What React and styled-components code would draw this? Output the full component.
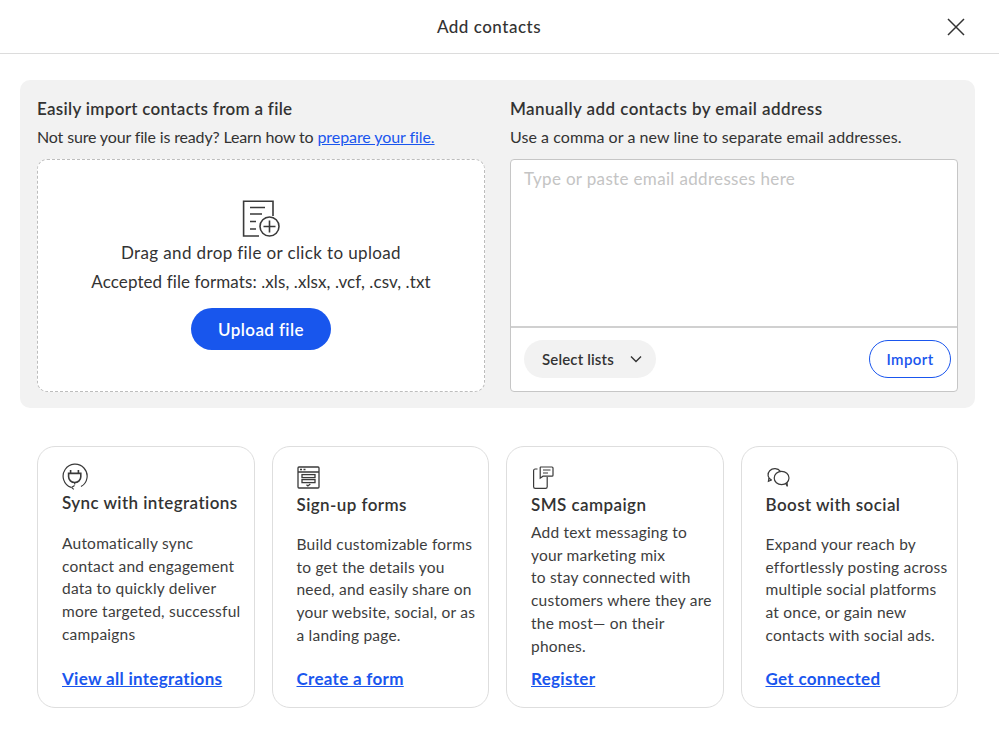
import React from "react";
import styled, { createGlobalStyle } from "styled-components";

const Global = createGlobalStyle`
  html, body { margin: 0; padding: 0; background: #fff; }
  body { font-family: "Lato", "Open Sans", sans-serif; color: #333; }
  * { box-sizing: border-box; }
`;

const Page = styled.div`
  width: 999px;
  height: 738px;
  overflow: hidden;
  display: flex;
  flex-direction: column;
`;
const Header = styled.header`
  height: 54px;
  flex: none;
  border-bottom: 1px solid #dcdcdc;
  display: flex;
  align-items: center;
  padding: 0 34px 0 20px;
`;
const Title = styled.h1`
  margin: 0;
  flex: 1;
  text-align: center;
  font-size: 17px;
  font-weight: 500;
  letter-spacing: 0.5px;
  padding-left: 11px;
`;
const Close = styled.button`
  border: 0;
  background: none;
  padding: 0;
  width: 18px;
  height: 18px;
  display: flex;
  color: #333;
`;
const Panel = styled.section`
  margin: 26px 24px 0 20px;
  height: 328px;
  background: #f2f2f2;
  border-radius: 10px;
  padding: 17px 17px;
  display: grid;
  grid-template-columns: 448px 448px;
  column-gap: 25px;
`;
const Column = styled.div`
  display: flex;
  flex-direction: column;
`;
const Heading = styled.h2`
  margin: 0;
  font-size: 17px;
  line-height: 24px;
  font-weight: 600;
  letter-spacing: ${(p) => p.$track}px;
  white-space: nowrap;
`;
const Sub = styled.p`
  margin: 5px 0 0;
  font-size: 16px;
  line-height: 22px;
  letter-spacing: ${(p) => p.$track}px;
  height: 33px;
  white-space: nowrap;
`;
const SubLink = styled.a`
  color: #1a56ee;
  text-decoration: underline;
  letter-spacing: -0.08px;
`;
const Drop = styled.div`
  height: 233px;
  border: 1px dashed #bdbdbd;
  border-radius: 10px;
  background: #fff;
  display: flex;
  flex-direction: column;
  align-items: center;
  padding-top: 40px;
`;
const DropText = styled.p`
  margin: ${(p) => p.$top}px 0 0;
  font-size: 17px;
  line-height: 22px;
  letter-spacing: ${(p) => p.$track}px;
  white-space: nowrap;
`;
const Upload = styled.button`
  margin-top: 15px;
  width: 140px;
  height: 42px;
  border: 0;
  border-radius: 21px;
  background: #1856ed;
  color: #fff;
  font: 600 17px "Lato", sans-serif;
  letter-spacing: 0.4px;
`;
const EmailBox = styled.div`
  height: 233px;
  border: 1px solid #c6c6c6;
  border-radius: 4px;
  background: #fff;
  display: flex;
  flex-direction: column;
`;
const EmailInput = styled.textarea`
  flex: none;
  height: 168px;
  border: 0;
  border-bottom: 2px solid #d0d0d0;
  outline: 0;
  resize: none;
  padding: 8px 13px;
  background: none;
  font: 400 17px/22px "Lato", sans-serif;
  letter-spacing: 0.34px;
  &::placeholder { color: #c4c4c4; opacity: 1; }
`;
const EmailFoot = styled.div`
  flex: 1;
  display: flex;
  align-items: center;
  justify-content: space-between;
  padding: 0 6px 2px 13px;
`;
const SelectPill = styled.button`
  width: 132px;
  height: 38px;
  border: 0;
  border-radius: 19px;
  background: #f2f2f2;
  color: #333;
  padding: 0 14px 0 18px;
  display: flex;
  align-items: center;
  justify-content: space-between;
  font: 600 15px "Lato", sans-serif;
  letter-spacing: 0.15px;
`;
const Import = styled.button`
  width: 82px;
  height: 38px;
  border: 1px solid #1a56ee;
  border-radius: 19px;
  background: #fff;
  color: #1a56ee;
  font: 600 15px "Lato", sans-serif;
  letter-spacing: 0.4px;
`;
const Cards = styled.section`
  margin: 38px 41px 0 37px;
  display: grid;
  grid-template-columns: repeat(4, minmax(0, 1fr));
  column-gap: 17px;
`;
const Card = styled.article`
  height: 262px;
  border: 1px solid #dedede;
  border-radius: 18px;
  padding: ${(p) => p.$top}px 12px 16px 24px;
  display: flex;
  flex-direction: column;
`;
const IconSlot = styled.div`
  height: ${(p) => p.$h}px;
  flex: none;
`;
const CardTitle = styled.h3`
  margin: 0;
  font-size: 17px;
  line-height: 24px;
  font-weight: 600;
  letter-spacing: 0.42px;
  white-space: nowrap;
`;
const CardBody = styled.p`
  margin: ${(p) => p.$gap}px 0 0;
  font-size: 15.5px;
  line-height: 22.7px;
  letter-spacing: 0.22px;
  color: #3d3d3d;
`;
const Line = styled.span`
  display: block;
  white-space: nowrap;
`;
const CardLink = styled.a`
  margin-top: auto;
  font-size: 17px;
  line-height: 24px;
  font-weight: 700;
  letter-spacing: 0.3px;
  color: #1a56ee;
  text-decoration: underline;
  white-space: nowrap;
`;
const Glyph = styled.svg`
  display: block;
  fill: none;
  stroke: #3a3a3a;
  stroke-width: ${(p) => p.$sw || 1.2};
`;

const PlugIcon = () => (
  <Glyph width="26" height="27" viewBox="0 0 26 27">
    <path d="M9 24.4A12 12 0 1 1 19 23.6" />
    <path d="M9.4 24.4l3.2 -2M9.4 24.4l2.4 2" />
    <path d="M8.6 7v3.4M16.4 7v3.4" strokeWidth="1.6" />
    <path d="M6.6 10.4h12.2v3.4a6 5.6 0 0 1 -12.2 0z" strokeWidth="1.6" />
    <path d="M12.7 19.4v2" />
  </Glyph>
);
const FormIcon = () => (
  <Glyph width="23" height="23" viewBox="0 0 23 23" $sw={1.3}>
    <rect x="1" y="1" width="21" height="21" rx="1" />
    <path d="M1 6h21M3 3.5h2M6.5 3.5h2" />
    <rect x="5" y="8.6" width="13" height="3" />
    <rect x="5" y="13.6" width="13" height="3" />
    <path d="M9.5 18.8l1.4 1.2 2.4 -2" />
  </Glyph>
);
const SmsIcon = () => (
  <Glyph width="23" height="24" viewBox="0 0 23 24" $sw={1.2}>
    <path d="M6.5 3H4A1.6 1.6 0 0 0 2.600 4.600V20.800A1.600 1.600 0 0 0 4.200 22.400H14.600A1.600 1.600 0 0 0 16.200 20.800V11" />
    <path d="M9.600 1H21A1 1 0 0 1 22 2V9.200A1 1 0 0 1 21 10.200H12L9.200 12.200V1.400z" />
    <path d="M12 4H19.500M12 7H17" />
  </Glyph>
);
const SocialIcon = () => (
  <Glyph width="24" height="21" viewBox="0 0 24 21" $sw={1.2}>
    <path d="M5.600 13A6.800 6 0 1 1 14.400 4.300" />
    <path d="M5.600 13L2.400 14.200L3 10.800" />
    <ellipse cx="15.600" cy="11" rx="7.400" ry="6.700" />
    <path d="M19.800 16.600L21.400 19.400L21 15.200" />
  </Glyph>
);

const cards = [
  {
    icon: <PlugIcon />, top: 16, slot: 28, gap: 17, title: "Sync with integrations",
    lines: ["Automatically sync", "contact and engagement", "data to quickly deliver", "more targeted, successful", "campaigns"],
    link: "View all integrations",
  },
  {
    icon: <FormIcon />, top: 19, slot: 27, gap: 16, title: "Sign-up forms",
    lines: ["Build customizable forms", "to get the details you", "need, and easily share on", "your website, social, or as", "a landing page."],
    link: "Create a form",
  },
  {
    icon: <SmsIcon />, top: 19, slot: 27, gap: 4, title: "SMS campaign",
    lines: ["Add text messaging to", "your marketing mix", "to stay connected with", "customers where they are", "the most\u2014 on their", "phones."],
    link: "Register",
  },
  {
    icon: <SocialIcon />, top: 20, slot: 26, gap: 16, title: "Boost with social",
    lines: ["Expand your reach by", "effortlessly posting across", "multiple social platforms", "at once, or gain new", "contacts with social ads."],
    link: "Get connected",
  },
];

export default function App() {
  return (
    <Page>
      <Global />
      <Header>
        <Title>Add contacts</Title>
        <Close aria-label="Close">
          <svg width="18" height="18" viewBox="0 0 18 18" fill="none" stroke="#333" strokeWidth="1.5">
            <path d="M1 1L17 17M17 1L1 17" />
          </svg>
        </Close>
      </Header>
      <Panel>
        <Column>
          <Heading $track={0.3}>Easily import contacts from a file</Heading>
          <Sub $track={-0.15}>
            Not sure your file is ready? Learn how to <SubLink href="#">prepare your file.</SubLink>
          </Sub>
          <Drop>
            <Glyph width="38" height="38" viewBox="0 0 38 38" $sw={1.6}>
              <path d="M31 16V1.200H1.600V36H17" />
              <circle cx="27.500" cy="26.500" r="9.500" />
              <path d="M27.500 20.500v12M21.500 26.500h12" />
              <path d="M8 7.500h15M8 14h12M8 21.500h6M8 29h6" />
            </Glyph>
            <DropText $top={4} $track={0.37}>Drag and drop file or click to upload</DropText>
            <DropText $top={7} $track={0.09}>Accepted file formats: .xls, .xlsx, .vcf, .csv, .txt</DropText>
            <Upload>Upload file</Upload>
          </Drop>
        </Column>
        <Column>
          <Heading $track={0.42}>Manually add contacts by email address</Heading>
          <Sub $track={0.06}>Use a comma or a new line to separate email addresses.</Sub>
          <EmailBox>
            <EmailInput placeholder="Type or paste email addresses here" />
            <EmailFoot>
              <SelectPill>
                Select lists
                <svg width="12" height="8" viewBox="0 0 12 8" fill="none" stroke="#333" strokeWidth="1.4">
                  <path d="M1 1.500L6 6.500L11 1.500" />
                </svg>
              </SelectPill>
              <Import>Import</Import>
            </EmailFoot>
          </EmailBox>
        </Column>
      </Panel>
      <Cards>
        {cards.map((c) => (
          <Card key={c.title} $top={c.top}>
            <IconSlot $h={c.slot}>{c.icon}</IconSlot>
            <CardTitle>{c.title}</CardTitle>
            <CardBody $gap={c.gap}>
              {c.lines.map((l) => (
                <Line key={l}>{l}</Line>
              ))}
            </CardBody>
            <CardLink href="#">{c.link}</CardLink>
          </Card>
        ))}
      </Cards>
    </Page>
  );
}
